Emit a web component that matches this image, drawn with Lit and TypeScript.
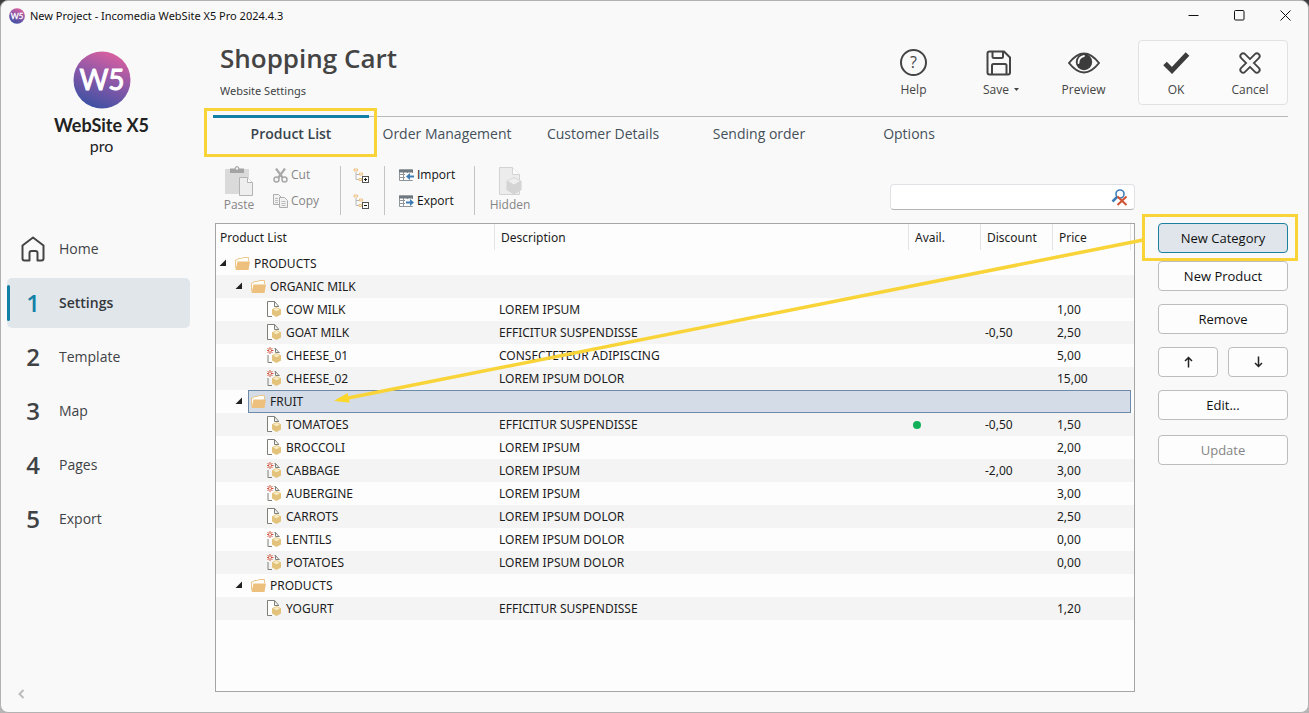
import { LitElement, html, svg, css, nothing } from "lit";
import { customElement, state } from "lit/decorators.js";
import { classMap } from "lit/directives/class-map.js";

type Kind = "folder" | "item" | "new";
interface Row {
  level: number;
  kind: Kind;
  name: string;
  description?: string;
  available?: boolean;
  discount?: string;
  price?: string;
}

const ROWS: Row[] = [
  { level: 0, kind: "folder", name: "PRODUCTS" },
  { level: 1, kind: "folder", name: "ORGANIC MILK" },
  { level: 2, kind: "item", name: "COW MILK", description: "LOREM IPSUM", price: "1,00" },
  { level: 2, kind: "item", name: "GOAT MILK", description: "EFFICITUR SUSPENDISSE", discount: "-0,50", price: "2,50" },
  { level: 2, kind: "new", name: "CHEESE_01", description: "CONSECTETEUR ADIPISCING", price: "5,00" },
  { level: 2, kind: "new", name: "CHEESE_02", description: "LOREM IPSUM DOLOR", price: "15,00" },
  { level: 1, kind: "folder", name: "FRUIT" },
  { level: 2, kind: "item", name: "TOMATOES", description: "EFFICITUR SUSPENDISSE", available: true, discount: "-0,50", price: "1,50" },
  { level: 2, kind: "item", name: "BROCCOLI", description: "LOREM IPSUM", price: "2,00" },
  { level: 2, kind: "new", name: "CABBAGE", description: "LOREM IPSUM", discount: "-2,00", price: "3,00" },
  { level: 2, kind: "new", name: "AUBERGINE", description: "LOREM IPSUM", price: "3,00" },
  { level: 2, kind: "item", name: "CARROTS", description: "LOREM IPSUM DOLOR", price: "2,50" },
  { level: 2, kind: "new", name: "LENTILS", description: "LOREM IPSUM DOLOR", price: "0,00" },
  { level: 2, kind: "new", name: "POTATOES", description: "LOREM IPSUM DOLOR", price: "0,00" },
  { level: 1, kind: "folder", name: "PRODUCTS" },
  { level: 2, kind: "item", name: "YOGURT", description: "EFFICITUR SUSPENDISSE", price: "1,20" },
];

const STEPS = ["Home", "Settings", "Template", "Map", "Pages", "Export"];
const TABS = ["Product List", "Order Management", "Customer Details", "Sending order", "Options"];

const logo = (size: number) => html`<svg width=${size} height=${size} viewBox="0 0 58 58" aria-hidden="true">
  <defs>
    <linearGradient id="ball" x1="0.75" y1="0" x2="0.35" y2="1">
      <stop offset="0" stop-color="#e0609f" />
      <stop offset="0.5" stop-color="#8a58a8" />
      <stop offset="1" stop-color="#3c51a3" />
    </linearGradient>
  </defs>
  <circle cx="29" cy="29" r="28.5" fill="url(#ball)" />
  <text class="mark" x="29" y="39" text-anchor="middle">W5</text>
</svg>`;

const folderIcon = html`<svg width="16" height="15" viewBox="0 0 16 15" aria-hidden="true">
  <path d="M0.500 12V4H2L3 2.500H6.500L8 1.500H13.500V5" fill="#fffdf8" stroke="#ecc78c" />
  <path d="M2.500 5.500H15L13.500 14H0.500z" fill="#edc07e" />
</svg>`;

const itemIcon = (fresh: boolean) => html`<svg width="16" height="17" viewBox="0 0 16 17" aria-hidden="true">
  ${fresh
    ? svg`<path d="M1 8V15.500H5M7.500 1.500H8.500L12 5.500M8.500 1.500V5.500H12.500" fill="none" stroke="#7d8078" />
      <path d="M3 0V7M-0.500 3.500H6.500M0.500 1L5.500 6M5.500 1L0.500 6" stroke="#d2573f" /><circle cx="3" cy="3.500" r="1" fill="#fff" />`
    : svg`<path d="M5 15.500H0.500V0.500H7.500L11.500 5V6M7.500 0.500V5.500H12" fill="#fff" stroke="#7d8078" />`}
  <path d="M9.500 6L14 8.200V13.500L9.500 16L5 13.500V8.200z" fill="#e3c37b" />
  <path d="M9.500 6.700L12.800 8.400L9.500 10.200L6.200 8.400z" fill="#f7ebc4" />
</svg>`;

const treeIcon = (plus: boolean) => html`<svg width="17" height="15" viewBox="0 0 17 15" aria-hidden="true">
  <path d="M3 4V11.500H6M3 6.500H6" fill="none" stroke="#b8b8b8" />
  <path d="M1 1H4.500V3H1zM6.500 5H9.500V7.500M6.500 5V7H9M6 10.500H8.500V12.500H6z" fill="none" stroke="#edc07e" />
  <rect x="9.500" y="8.500" width="6" height="6" fill="#fff" stroke="#555" />
  <path d=${plus ? "M11 11.500H14M12.500 10V13" : "M11 11.500H14"} stroke="#111" />
</svg>`;

const gridIcon = (arrow: string) => html`<svg width="15" height="13" viewBox="0 0 15 13" aria-hidden="true">
  <path d="M0.500 1H13.500V11.500H0.500zM0.500 5.500H13M0.500 8.500H13M4.500 3V11.500M8.500 3V11.500" fill="#fff" stroke="#8f9599" />
  <rect x="0" y="0.500" width="14" height="3" fill="#6f787e" />
  <path d="M6 4H15V11H6z" fill="#fafafa" />
  <path d=${arrow} fill="#3f7cb5" />
</svg>`;

@customElement("app-root")
export class AppRoot extends LitElement {
  @state() private tab = 0;
  @state() private step = 1;
  @state() private selected = 6;

  static styles = css`
    :host {
      display: block;
      background: linear-gradient(#3a3a3c, #b5b5b5 40px);
      color: #3f4346;
      font: 12px/18px "Open Sans", "Noto Sans", sans-serif;
    }
    * { box-sizing: border-box; }
    svg { display: block; flex: none; }
    button, input { font: inherit; color: inherit; }
    button { background: none; border: 0; padding: 0; margin: 0; }
    a { color: inherit; text-decoration: none; }
    .window {
      display: flex;
      flex-direction: column;
      min-height: 100vh;
      background: #f9f9f9;
      border: 1px solid #b2b2b2;
      border-radius: 8px;
      overflow: hidden;
    }
    .mark { font: 400 28px "Lato", sans-serif; fill: #fff; stroke: #fff; stroke-width: 1px; }

    .titlebar { display: flex; align-items: center; height: 29px; padding-left: 8px; gap: 5px; color: #111; font-family: "Noto Sans", sans-serif; font-size: 11px; }
    .titlebar h2 { flex: 1; margin: 0; font: inherit; }
    .caption { display: flex; }
    .caption button { display: grid; place-items: center; width: 46px; height: 29px; }

    .body { display: flex; flex: 1; }
    .sidebar { display: flex; flex-direction: column; flex: none; width: 189px; padding: 21px 0 10px 6px; }
    .brand { display: flex; flex-direction: column; align-items: center; height: 173px; padding-left: 6px; color: #222; }
    .brand strong { margin-top: 5px; font: 700 18px/22px "Lato", sans-serif; }
    .brand span { font: 16px/20px "Lato", sans-serif; }
    .steps { display: flex; flex-direction: column; gap: 4px; }
    .step { position: relative; display: grid; grid-template-columns: 52px 1fr; align-items: center; height: 50px; border-radius: 5px; font-size: 14px; line-height: 20px; }
    .step b { justify-self: center; font-size: 24px; font-weight: 600; }
    .step svg { justify-self: center; }
    .step.on { background: #e1e6eb; font-weight: 600; color: #33383c; }
    .step.on b { color: #1280a6; }
    .step.on::before { content: ""; position: absolute; left: 0; top: 7px; bottom: 7px; width: 3px; border-radius: 2px; background: #1280a6; }
    .collapse { margin-top: auto; width: 28px; height: 16px; display: grid; place-items: center; }

    .main { flex: 1; min-width: 0; display: flex; flex-direction: column; padding: 10px 20px 20px 23px; }
    .header { display: flex; align-items: flex-start; height: 76px; }
    .heading { flex: 1; padding-left: 7px; }
    .heading h1 { margin: 0; font-size: 26px; line-height: 36px; font-weight: 600; color: #444; }
    .heading p { margin: 6px 0 0; font-family: "Noto Sans", sans-serif; font-size: 11px; }
    .commands { display: flex; }
    .command { display: flex; flex-direction: column; align-items: center; justify-content: center; width: 85px; height: 65px; gap: 3px; padding-top: 1px; line-height: 18px; color: #444; }
    .command i { display: grid; place-items: center; height: 30px; font-style: normal; }
    .caret { display: flex; align-items: center; gap: 5px; padding-left: 5px; }
    .confirm { display: flex; margin-left: 12px; border: 1px solid #e2e2e2; border-radius: 4px; background: #fbfbfb; }
    .confirm .command { width: 74px; height: 63px; }
    .help { width: 27px; height: 27px; border: 2px solid #444; border-radius: 50%; font-size: 16px; line-height: 23px; text-align: center; }

    .tabs { display: flex; border-top: 1px solid #b9b9b9; height: 47px; }
    .tab { position: relative; width: 156px; height: 34px; font-size: 14px; color: #44505a; }
    .tab:last-child { width: 144px; }
    .tab.on { font-weight: 600; color: #39444d; }
    .tab.on::before { content: ""; position: absolute; left: 0; right: 0; top: -2px; height: 3px; background: #1280a6; }
    .tab.on::after { content: ""; position: absolute; inset: -9px -8px -6px -9px; border: 3px solid #f9d438; }

    .tools { display: flex; align-items: flex-start; height: 60px; padding: 3px 0 0 2px; }
    .tall { display: flex; flex-direction: column; align-items: center; width: 48px; color: #858585; }
    .stack { display: flex; flex-direction: column; gap: 8px; }
    .stack button { display: flex; align-items: center; gap: 3px; height: 18px; }
    .edit { margin-left: 10px; width: 67px; color: #858585; }
    .tree { width: 43px; padding-left: 12px; }
    .data { width: 89px; padding-left: 14px; color: #111; }
    .rule { width: 1px; height: 49px; background: #c4c4c4; }
    .hide { width: 70px; }
    .search { display: flex; align-items: center; width: 245px; height: 26px; margin: 18px 153px 0 auto; padding-right: 6px; border: 1px solid #dfe1e4; border-bottom-color: #b5b5b5; border-radius: 4px; background: #fff; }
    .search input { flex: 1; min-width: 0; border: 0; outline: 0; background: none; padding: 0 6px; }

    .work { position: relative; display: flex; flex: 1; gap: 23px; padding-left: 2px; }
    .list { flex: 1; min-width: 0; border: 1px solid #a5a5a5; background: #fdfdfd; }
    table { width: 100%; table-layout: fixed; border-collapse: separate; border-spacing: 0; color: #1c1c1c; font-family: "Noto Sans", sans-serif; font-size: 12px; }
    .c-name { width: 279px; }
    .c-small { width: 72px; }
    .c-price { width: 78px; }
    .c-end { width: 3px; }
    th { height: 28px; padding: 0 0 1px 6px; text-align: left; font-weight: 400; background: linear-gradient(90deg, #e4e4e4, #e4e4e4) right top / 1px 26px no-repeat; }
    th:first-child { padding-left: 4px; }
    td { height: 23px; padding: 0 0 0 4px; line-height: 22px; white-space: nowrap; }
    tbody tr:nth-child(even) { background: #f4f4f4; }
    td:first-child { padding: 0; }
    .node { display: flex; }
    .indent { width: 16px; }
    .toggle { width: 16px; height: 22px; padding-left: 3px; }
    .label { flex: 1; display: flex; align-items: center; gap: 3px; height: 23px; padding-left: 3px; }
    .picked .label, .picked td:not(:first-child) { background: #d4dde7; box-shadow: inset 0 1px #6d8ba8, inset 0 -1px #6d8ba8; }
    .picked .label { box-shadow: inset 0 1px #6d8ba8, inset 0 -1px #6d8ba8, inset 1px 0 #6d8ba8; }
    .picked td.price { box-shadow: inset 0 1px #6d8ba8, inset 0 -1px #6d8ba8, inset -1px 0 #6d8ba8; }
    .picked td.end:not(:first-child) { background: none; box-shadow: none; }
    .dot { display: block; width: 8px; height: 8px; border-radius: 50%; background: #13b05a; }

    .actions { flex: none; width: 130px; display: flex; flex-direction: column; gap: 13px; color: #111; }
    .action { position: relative; flex: 1; display: grid; place-items: center; min-height: 30px; max-height: 30px; border: 1px solid #bdbdbd; border-radius: 4px; background: #fdfdfd; font-size: 13px; }
    .action:disabled { color: #858585; margin-top: 2px; }
    .pair { display: flex; gap: 10px; height: 30px; }
    .group { display: flex; flex-direction: column; gap: 8px; height: 68px; }
    .primary { background: #dfe5ea; border-color: #1c7f9f; }
    .primary::after { content: ""; position: absolute; inset: -10px -11px -9px -17px; border: 3px solid #f9d438; }
    .pointer { position: absolute; left: 121px; top: 0; width: calc(100% - 266px); height: 190px; overflow: visible; pointer-events: none; }
  `;

  private row(r: Row, i: number) {
    return html`<tr class=${classMap({ picked: i === this.selected })} @click=${() => (this.selected = i)}>
      <td>
        <div class="node">
          ${Array.from({ length: r.level }, () => html`<span class="indent"></span>`)}
          ${r.kind === "folder"
            ? html`<button class="toggle" aria-label="Collapse ${r.name}">
                <svg width="8" height="8" viewBox="0 0 8 8"><path d="M7 0.500V7H0.500z" fill="#222" /></svg>
              </button>`
            : html`<span class="indent"></span>`}
          <span class="label">${r.kind === "folder" ? folderIcon : itemIcon(r.kind === "new")}${r.name}</span>
        </div>
      </td>
      <td>${r.description}</td>
      <td>${r.available ? html`<span class="dot" role="img" aria-label="Available"></span>` : nothing}</td>
      <td>${r.discount}</td>
      <td class="price">${r.price}</td>
      <td class="end"></td>
    </tr>`;
  }

  render() {
    return html`<div class="window">
      <header class="titlebar">
        ${logo(16)}
        <h2>New Project - Incomedia WebSite X5 Pro 2024.4.3</h2>
        <div class="caption">
          <button aria-label="Minimize"><svg width="11" height="11" viewBox="0 0 11 11"><path d="M0.500 5.500H10.500" stroke="#111" /></svg></button>
          <button aria-label="Maximize"><svg width="11" height="11" viewBox="0 0 11 11"><rect x="0.500" y="0.500" width="9.500" height="9.500" rx="1" fill="none" stroke="#111" /></svg></button>
          <button aria-label="Close"><svg width="11" height="11" viewBox="0 0 11 11"><path d="M0.500 0.500L10.500 10.500M10.500 0.500L0.500 10.500" stroke="#111" /></svg></button>
        </div>
      </header>
      <div class="body">
        <aside class="sidebar">
          <div class="brand">${logo(58)}<strong>WebSite X5</strong><span>pro</span></div>
          <nav class="steps">
            ${STEPS.map((s, i) => html`<a href="#" class=${classMap({ step: true, on: i === this.step })} @click=${() => (this.step = i)}>
              ${i === 0
                ? html`<svg width="24" height="26" viewBox="0 0 24 26" aria-hidden="true"><path d="M12 1.500L22.500 9.500V22.500Q22.500 24.500 20.500 24.500H16.500V17Q16.500 15 14.500 15H10.500Q8.500 15 8.500 17V24.500H3.500Q1.500 24.500 1.500 22.500V9.500z" fill="none" stroke="#444" stroke-width="2" stroke-linejoin="round" /></svg>`
                : html`<b>${i}</b>`}
              <span>${s}</span></a>`)}
          </nav>
          <button class="collapse" aria-label="Collapse sidebar"><svg width="7" height="10" viewBox="0 0 7 10"><path d="M5.500 1L1.500 5L5.500 9" fill="none" stroke="#bcbcbc" stroke-width="2" /></svg></button>
        </aside>
        <main class="main">
          <div class="header">
            <div class="heading"><h1>Shopping Cart</h1><p>Website Settings</p></div>
            <div class="commands">
              <button class="command"><i><span class="help">?</span></i>Help</button>
              <button class="command"><i><svg width="26" height="26" viewBox="0 0 26 26" aria-hidden="true">
                <path d="M3.500 1.500H18L24 7.500V22.500Q24 24.500 22 24.500H3.500Q1.500 24.500 1.500 22.500V3.500Q1.500 1.500 3.500 1.500zM6.500 1.500V6.500Q6.500 8 8 8H15.500Q17 8 17 6.500V1.500M6 24V15.500Q6 14 7.500 14H19Q20.500 14 20.500 15.500V24" fill="none" stroke="#444" stroke-width="2" /></svg></i>
                <span class="caret">Save<svg width="5" height="3" viewBox="0 0 5 3"><path d="M0 0H5L2.500 3z" fill="#444" /></svg></span></button>
              <button class="command"><i><svg width="32" height="22" viewBox="0 0 32 22" aria-hidden="true">
                <path d="M1 11Q16 -8 31 11Q16 30 1 11z" fill="none" stroke="#444" stroke-width="2" stroke-linejoin="round" />
                <circle cx="16" cy="10" r="8.200" fill="#3c3c3c" /><path d="M10.500 11Q10.500 5 16 4" fill="none" stroke="#f9f9f9" stroke-width="1.800" stroke-linecap="round" /></svg></i>Preview</button>
              <div class="confirm">
                <button class="command"><i><svg width="28" height="24" viewBox="0 0 28 24" aria-hidden="true"><path d="M3 12.500L10 19.500L25.500 3" fill="none" stroke="#3c3c3c" stroke-width="5" /></svg></i>OK</button>
                <button class="command"><i><svg width="22" height="22" viewBox="0 0 24 24" aria-hidden="true">
                  <path d="M4.500 4.500L19.500 19.500M19.500 4.500L4.500 19.500" stroke="#444" stroke-width="8" stroke-linecap="round" />
                  <path d="M4.500 4.500L19.500 19.500M19.500 4.500L4.500 19.500" stroke="#fbfbfb" stroke-width="4" stroke-linecap="round" /></svg></i>Cancel</button>
              </div>
            </div>
          </div>
          <div class="tabs" role="tablist">
            ${TABS.map((t, i) => html`<button role="tab" aria-selected=${i === this.tab} class=${classMap({ tab: true, on: i === this.tab })} @click=${() => (this.tab = i)}>${t}</button>`)}
          </div>
          <div class="tools">
            <button class="tall" disabled><svg width="28" height="30" viewBox="0 0 28 30" aria-hidden="true">
              <rect x="0" y="3" width="24" height="25" fill="#dadada" /><path d="M5 2.500H9.500Q10 0 12 0T14.500 2.500H19V7H5z" fill="#a3a3a3" /><circle cx="12" cy="2.500" r="1.200" fill="#f4f4f4" />
              <path d="M14.500 11.500H22.500L27.500 16.500V29.500H14.500z" fill="#eee" stroke="#b4b4b4" /><path d="M22.500 11.500V16.500H27.500" fill="#fff" stroke="#b4b4b4" /></svg>Paste</button>
            <div class="stack edit">
              <button disabled><svg width="15" height="15" viewBox="0 0 15 15" aria-hidden="true"><path d="M3 0.500L9.500 9.500M12 0.500L5.500 9.500" stroke="#a9a9a9" stroke-width="2.200" /><circle cx="3.500" cy="11.500" r="2.500" fill="none" stroke="#a9a9a9" stroke-width="1.500" /><circle cx="11.500" cy="11.500" r="2.500" fill="none" stroke="#a9a9a9" stroke-width="1.500" /></svg>Cut</button>
              <button disabled><svg width="15" height="14" viewBox="0 0 15 14" aria-hidden="true"><path d="M0.500 0.500H5.500L8.500 3.500V10.500H0.500z" fill="#f2f2f2" stroke="#adadad" /><path d="M2 4.500H5M2 6.500H5M2 8.500H5" stroke="#bdbdbd" /><path d="M6.500 3.500H11.500L14.500 6.500V13.500H6.500z" fill="#f2f2f2" stroke="#adadad" /><path d="M8.500 7.500H12.500M8.500 9.500H12.500M8.500 11.500H12.500" stroke="#bdbdbd" /></svg>Copy</button>
            </div>
            <span class="rule"></span>
            <div class="stack tree">
              <button aria-label="Expand all">${treeIcon(true)}</button>
              <button aria-label="Collapse all">${treeIcon(false)}</button>
            </div>
            <span class="rule"></span>
            <div class="stack data">
              <button>${gridIcon("M7 7.500L11 4V6.500H15V8.500H11V11z")}Import</button>
              <button>${gridIcon("M15 7.500L11 4V6.500H7V8.500H11V11z")}Export</button>
            </div>
            <span class="rule"></span>
            <button class="tall hide" disabled><svg width="23" height="30" viewBox="0 0 23 30" aria-hidden="true">
              <path d="M0.500 1.500H13.500L20.500 8.500V28.500H0.500z" fill="#ececec" stroke="#d3d3d3" /><path d="M13.500 1.500V8.500H20.500" fill="#fff" stroke="#d3d3d3" />
              <path d="M15 11L22.500 15V24L15 28.500L7.500 24V15z" fill="#d4d4d4" /><path d="M15 12L21 15L15 18.500L9 15z" fill="#efefef" /></svg>Hidden</button>
            <div class="search">
              <input type="text" aria-label="Search products" />
              <button aria-label="Clear search"><svg width="17" height="17" viewBox="0 0 17 17"><path d="M6.500 7.500L1.500 12.500" stroke="#3f7cb5" stroke-width="2.500" /><circle cx="9" cy="5" r="4" fill="#fff" stroke="#3f7cb5" stroke-width="1.600" /><path d="M6.500 7.500L15.500 16M15.500 7.500L6.500 16" stroke="#cf5332" stroke-width="2" /></svg></button>
            </div>
          </div>
          <div class="work">
            <div class="list">
              <table>
                <colgroup><col class="c-name" /><col /><col class="c-small" /><col class="c-small" /><col class="c-price" /><col class="c-end" /></colgroup>
                <thead><tr><th>Product List</th><th>Description</th><th>Avail.</th><th>Discount</th><th>Price</th><td></td></tr></thead>
                <tbody>${ROWS.map((r, i) => this.row(r, i))}</tbody>
              </table>
            </div>
            <div class="actions">
              <div class="group">
                <button class="action primary">New Category</button>
                <button class="action">New Product</button>
              </div>
              <button class="action">Remove</button>
              <div class="pair">
                <button class="action" aria-label="Move up"><svg width="9" height="12" viewBox="0 0 9 12"><path d="M4.500 11.500V1.500M1 5L4.500 1.500L8 5" fill="none" stroke="#222" stroke-width="1.500" /></svg></button>
                <button class="action" aria-label="Move down"><svg width="9" height="12" viewBox="0 0 9 12"><path d="M4.500 0.500V10.500M1 7L4.500 10.500L8 7" fill="none" stroke="#222" stroke-width="1.500" /></svg></button>
              </div>
              <button class="action">Edit...</button>
              <button class="action" disabled>Update</button>
            </div>
            <svg class="pointer" aria-hidden="true">
              <defs><marker id="head" viewBox="0 0 15 10" refX="4" refY="5" markerWidth="15" markerHeight="10" markerUnits="userSpaceOnUse" orient="auto"><path d="M0 5L15 0V10z" fill="#fbd72b" /></marker></defs>
              <line x1="4" y1="177" x2="100%" y2="17" stroke="#f9d438" stroke-width="3.500" marker-start="url(#head)" />
            </svg>
          </div>
        </main>
      </div>
    </div>`;
  }
}
